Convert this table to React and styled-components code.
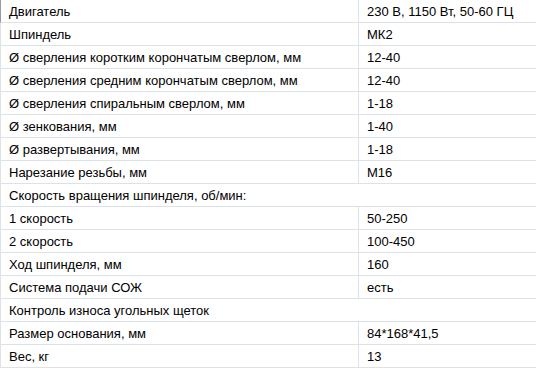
import React from "react"
import styled, { createGlobalStyle } from "styled-components"

const GlobalStyle = createGlobalStyle`
  body {
    margin: 0;
    background: #fff;
    font-family: "Liberation Sans", Arial, sans-serif;
  }
`

const Table = styled.div`
  width: 536px;
  display: flex;
  flex-direction: column;
`

const Row = styled.div`
  display: grid;
  grid-template-columns: ${(p) => (p.$wide ? "1fr" : "358px 1fr")};
  height: 22px;
  border-bottom: 1px solid #dbe2ea;
  border-left: 1px solid ${(p) => (p.$first ? "#9a9a9a" : "#dbe2ea")};
`

const Cell = styled.div`
  display: flex;
  align-items: center;
  padding: 0 8px;
  font-size: 13px;
  color: #000;
  white-space: nowrap;
  border-right: ${(p) => (p.$divider ? "1px solid #dbe2ea" : "none")};
`

const specs = [
  ["Двигатель", "230 В, 1150 Вт, 50-60 ГЦ"],
  ["Шпиндель", "МК2"],
  ["Ø сверления коротким корончатым сверлом, мм", "12-40"],
  ["Ø сверления средним корончатым сверлом, мм", "12-40"],
  ["Ø сверления спиральным сверлом, мм", "1-18"],
  ["Ø зенкования, мм", "1-40"],
  ["Ø развертывания, мм", "1-18"],
  ["Нарезание резьбы, мм", "М16"],
  ["Скорость вращения шпинделя, об/мин:"],
  ["1 скорость", "50-250"],
  ["2 скорость", "100-450"],
  ["Ход шпинделя, мм", "160"],
  ["Система подачи СОЖ", "есть"],
  ["Контроль износа угольных щеток"],
  ["Размер основания, мм", "84*168*41,5"],
  ["Вес, кг", "13"],
]

const App = () => {
  return (
    <>
      <GlobalStyle />
      <Table>
        {specs.map(([name, value], i) =>
          value === undefined ? (
            <Row key={i} $wide $first={i === 0}>
              <Cell>{name}</Cell>
            </Row>
          ) : (
            <Row key={i} $first={i === 0}>
              <Cell $divider>{name}</Cell>
              <Cell>{value}</Cell>
            </Row>
          )
        )}
      </Table>
    </>
  )
}

export default App
